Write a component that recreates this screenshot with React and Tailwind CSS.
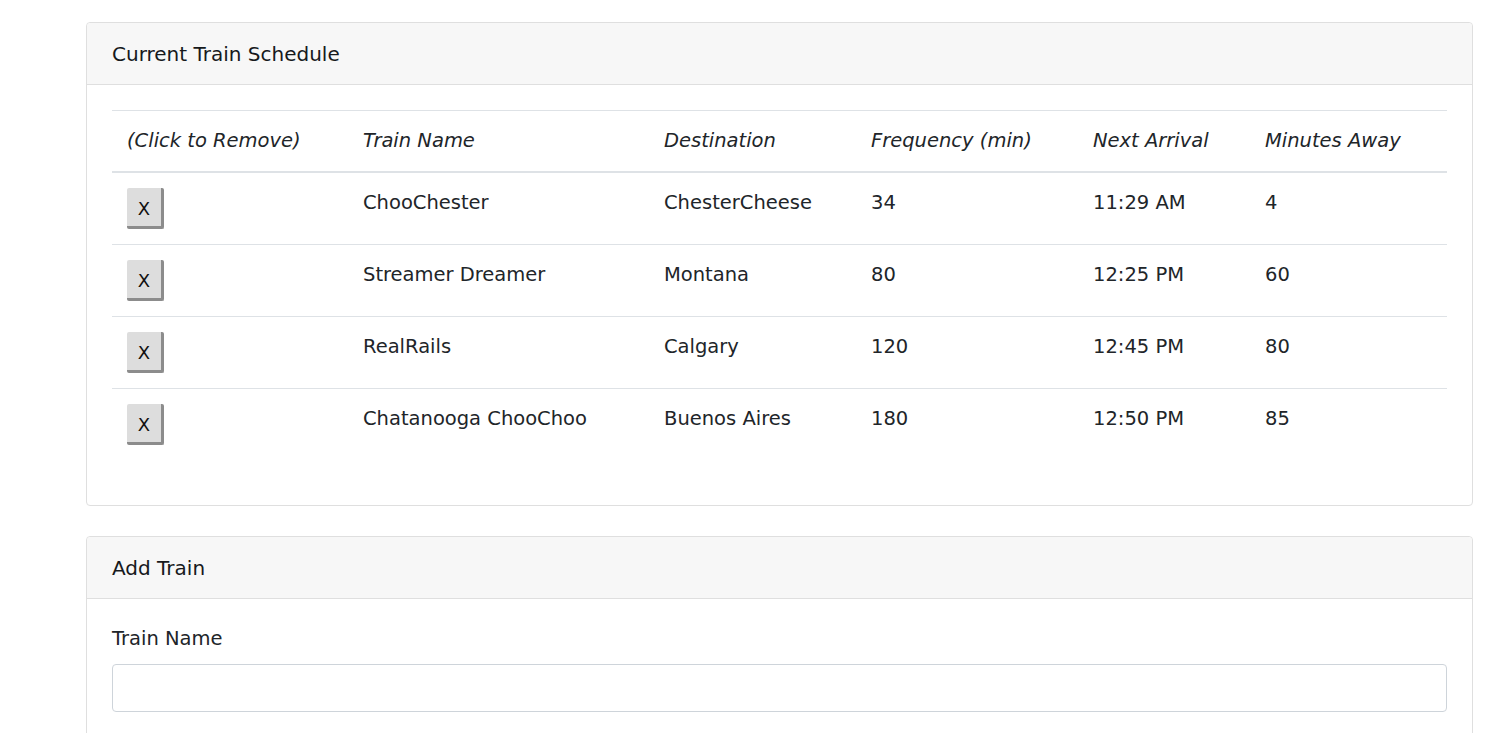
const trains = [
  { name: "ChooChester", dest: "ChesterCheese", freq: "34", next: "11:29 AM", away: "4" },
  { name: "Streamer Dreamer", dest: "Montana", freq: "80", next: "12:25 PM", away: "60" },
  { name: "RealRails", dest: "Calgary", freq: "120", next: "12:45 PM", away: "80" },
  { name: "Chatanooga ChooChoo", dest: "Buenos Aires", freq: "180", next: "12:50 PM", away: "85" },
];

const headings = ["(Click to Remove)", "Train Name", "Destination", "Frequency (min)", "Next Arrival", "Minutes Away"];

function Card({ title, children }) {
  return (
    <div className="flex flex-col rounded-[4px] border border-[#dfdfdf] bg-white">
      <div className="h-[62px] flex items-center px-[25px] bg-[#f7f7f7] border-b border-[#dfdfdf] rounded-t-[4px]">
        <h5 className="text-[20px] leading-[30px] text-[#16191c]">{title}</h5>
      </div>
      <div className="px-[25px] pt-[25px] pb-[25px]">{children}</div>
    </div>
  );
}

export default function App() {
  return (
    <div
      className="min-h-screen bg-white text-[#212529] text-[19.5px] leading-[30px] pt-[22px]"
      style={{ fontFamily: '"DejaVu Sans", sans-serif' }}
    >
      <div className="ml-[86px] w-[1387px] flex flex-col gap-[30px]">
        <Card title="Current Train Schedule">
          <table className="w-full mb-[20px] border-collapse table-fixed">
            <colgroup>
              <col className="w-[236px]" />
              <col className="w-[301px]" />
              <col className="w-[207px]" />
              <col className="w-[222px]" />
              <col className="w-[172px]" />
              <col />
            </colgroup>
            <thead>
              <tr className="border-t border-[#dee2e6]">
                {headings.map((h) => (
                  <th key={h} className="px-[15px] pt-[15px] pb-[15px] text-left font-normal italic align-bottom border-b-2 border-[#dee2e6]">
                    {h}
                  </th>
                ))}
              </tr>
            </thead>
            <tbody>
              {trains.map((t) => (
                <tr key={t.name} className="border-t border-[#dee2e6]">
                  <td className="px-[15px] pt-[15px] pb-[15px] align-top h-[71px]">
                    <button
                      className="w-[37px] h-[41px] bg-[#dddddd] rounded-[2px] border-r-[3px] border-b-[3px] border-[#8c8c8c] text-[#111] text-[18px] leading-none flex items-center justify-center pt-[4px]"
                    >
                      X
                    </button>
                  </td>
                  <td className="px-[15px] py-[15px] align-top">{t.name}</td>
                  <td className="px-[15px] py-[15px] align-top">{t.dest}</td>
                  <td className="px-[15px] py-[15px] align-top">{t.freq}</td>
                  <td className="px-[15px] py-[15px] align-top">{t.next}</td>
                  <td className="px-[15px] py-[15px] align-top">{t.away}</td>
                </tr>
              ))}
            </tbody>
          </table>
        </Card>
        <Card title="Add Train">
          <label className="block mb-[10px]">Train Name</label>
          <input type="text" className="block w-full h-[48px] rounded-[4px] border border-[#ced4da] px-[15px]" />
          <div className="h-[40px]" />
        </Card>
      </div>
    </div>
  );
}
